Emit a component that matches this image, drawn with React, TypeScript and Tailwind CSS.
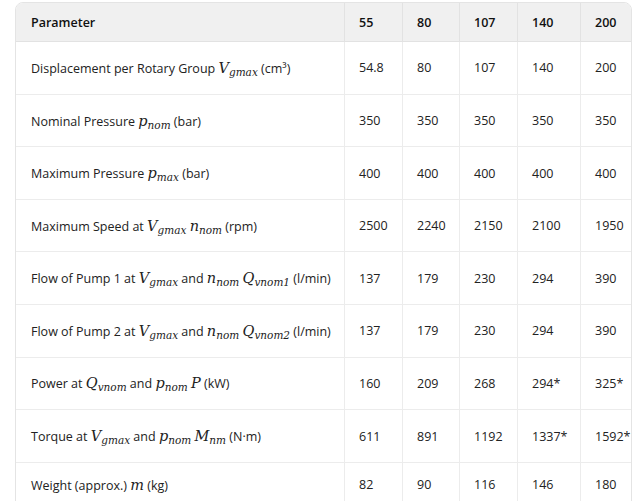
import React from "react";

const M = ({ b, s }: { b: string; s?: string }) => (
  <span className="whitespace-nowrap" style={{ fontFamily: '"DejaVu Serif", "Liberation Serif", serif' }}>
    <span className="italic text-[14.5px]">{b}</span>
    {s && <span className="italic text-[10.5px] relative top-[3px]">{s}</span>}
  </span>
);

type Row = { label: React.ReactNode; vals: string[]; h: string };

const rows: Row[] = [
  { label: <>Displacement per Rotary Group <M b="V" s="gmax" /> (cm³)</>, vals: ["54.8", "80", "107", "140", "200"], h: "h-[52.6px]" },
  { label: <>Nominal Pressure <M b="p" s="nom" /> (bar)</>, vals: ["350", "350", "350", "350", "350"], h: "h-[52.6px]" },
  { label: <>Maximum Pressure <M b="p" s="max" /> (bar)</>, vals: ["400", "400", "400", "400", "400"], h: "h-[52.6px]" },
  { label: <>Maximum Speed at <M b="V" s="gmax" /> <M b="n" s="nom" /> (rpm)</>, vals: ["2500", "2240", "2150", "2100", "1950"], h: "h-[52.6px]" },
  { label: <>Flow of Pump 1 at <M b="V" s="gmax" /> and <M b="n" s="nom" /> <M b="Q" s="vnom1" /> (l/min)</>, vals: ["137", "179", "230", "294", "390"], h: "h-[52.6px]" },
  { label: <>Flow of Pump 2 at <M b="V" s="gmax" /> and <M b="n" s="nom" /> <M b="Q" s="vnom2" /> (l/min)</>, vals: ["137", "179", "230", "294", "390"], h: "h-[52.6px]" },
  { label: <>Power at <M b="Q" s="vnom" /> and <M b="p" s="nom" /> <M b="P" /> (kW)</>, vals: ["160", "209", "268", "294*", "325*"], h: "h-[52.6px]" },
  { label: <>Torque at <M b="V" s="gmax" /> and <M b="p" s="nom" /> <M b="M" s="nm" /> (N·m)</>, vals: ["611", "891", "1192", "1337*", "1592*"], h: "h-[52.6px]" },
  { label: <>Weight (approx.) <M b="m" /> (kg)</>, vals: ["82", "90", "116", "146", "180"], h: "h-[45px]" },
];

const cols = "grid grid-cols-[328px_58px_57px_58px_63px_53px]";

export default function App() {
  return (
    <div className="bg-white w-[644px] h-[501px] overflow-hidden pt-[2px] pl-[15px]" style={{ fontFamily: '"Open Sans", "Noto Sans", sans-serif' }}>
      <div className="w-[617px] rounded-t-[8px] border border-[#e4e4e4] overflow-hidden text-[12.5px] text-[#222]">
        <div className={`${cols} h-[39px] bg-[#f0f0f0] font-semibold text-[#111] border-b border-[#e2e2e2]`}>
          <div className="flex items-center pl-[15px] pt-[3px]">Parameter</div>
          {["55", "80", "107", "140", "200"].map((h) => (
            <div key={h} className="flex items-center pl-[14px] pt-[3px] border-l border-[#e2e2e2]">{h}</div>
          ))}
        </div>
        {rows.map((r, i) => (
          <div key={i} className={`${cols} ${r.h} border-b border-[#ececec]`}>
            <div className="flex items-center pl-[15px] pt-[2px] whitespace-nowrap">
              <span>{r.label}</span>
            </div>
            {r.vals.map((v, j) => (
              <div key={j} className="flex items-center pl-[14px] pt-[2px] border-l border-[#ececec] whitespace-nowrap">{v}</div>
            ))}
          </div>
        ))}
      </div>
    </div>
  );
}
